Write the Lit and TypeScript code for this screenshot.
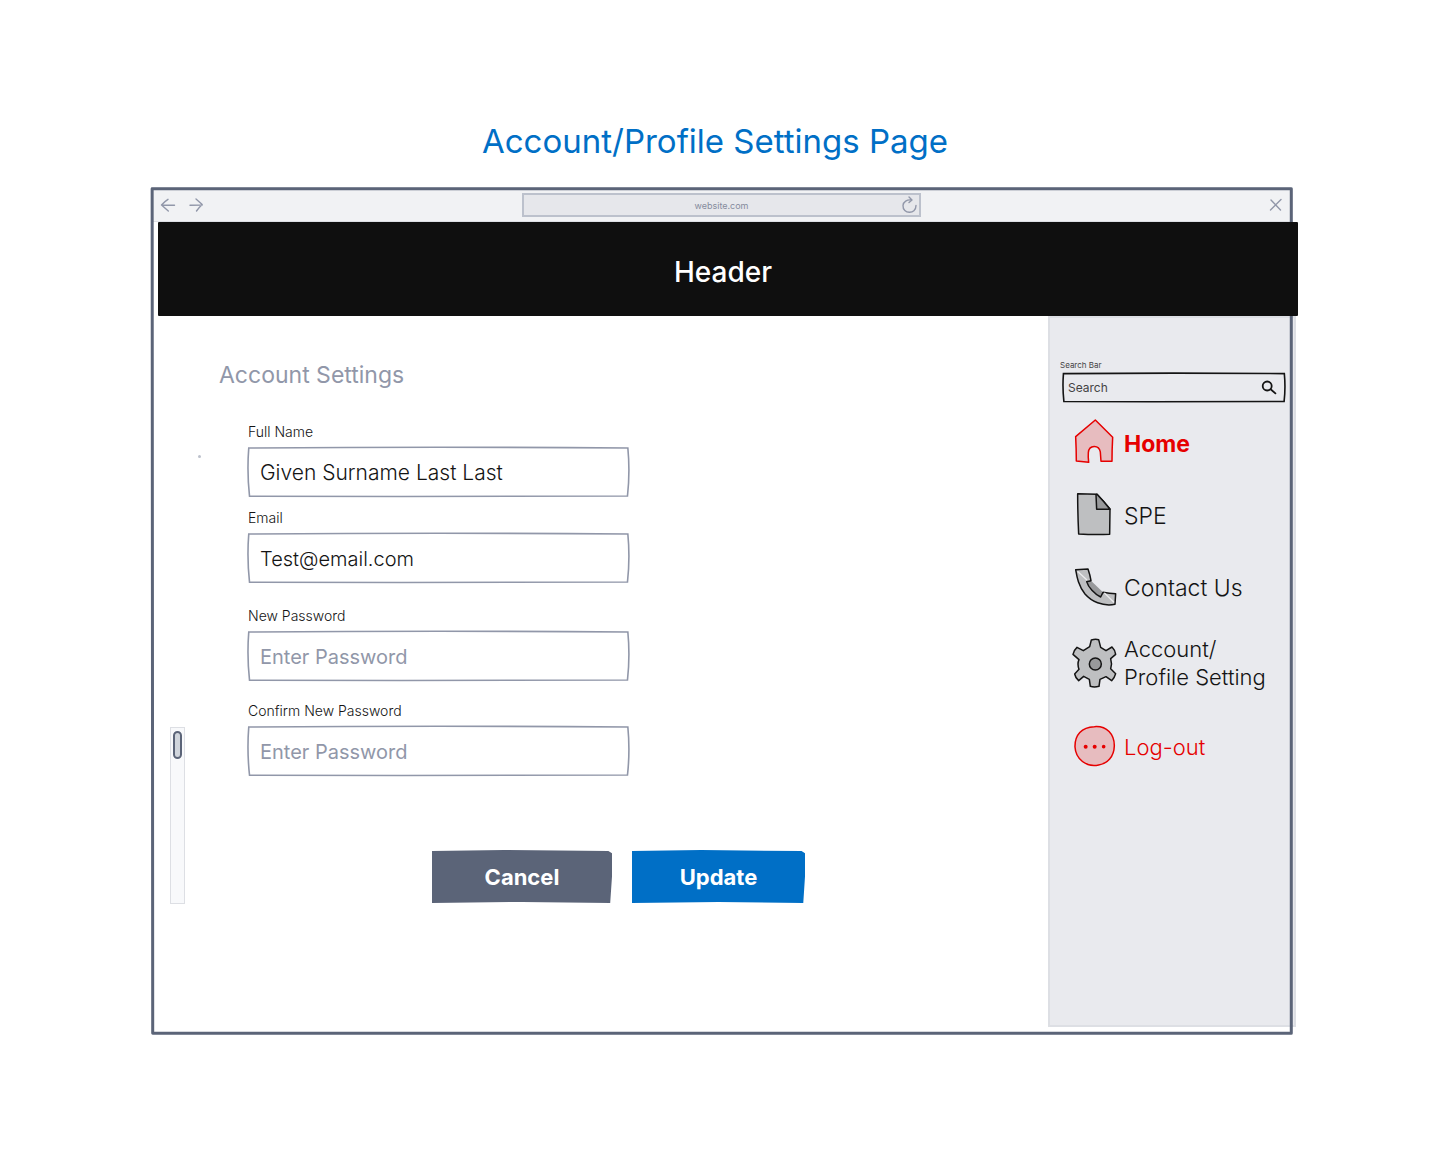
import { LitElement, html, css, svg, nothing } from "lit";
import { customElement, property, state } from "lit/decorators.js";

type IconName = "home" | "file" | "phone" | "gear" | "more";

const icons = {
  home: svg`<g transform="translate(-30 -79) scale(.3333)">
    <path fill="#e7bcbf" stroke="#e60000" stroke-width="4.5" d="M163 240 L104 290 Q106 330 106 363 L143 367 Q141 350 142 338 C144 314 174 314 178 336 L180 364 L213 364 Q213 330 215 292 Z"/>
  </g>`,
  file: svg`<g transform="translate(-10 -11) scale(.3333)">
    <path fill="#bebfc1" stroke="#141414" stroke-width="4.5" d="M50 41 L108 43 Q130 66 147 87 L146 163 Q100 165 53 162 Q50 100 50 41 Z"/>
    <path fill="#98999b" stroke="#141414" stroke-width="4.5" d="M105 44 L107 88 L147 88 Q128 64 108 43 Z"/>
  </g>`,
  phone: svg`<g transform="translate(-10 -83) scale(.3333)">
    <path fill="#98999b" d="M90 302 L126 337 L119 351 Q88 335 77 305 Z"/>
    <path fill="#bebfc1" stroke="#141414" stroke-width="4.5" d="M44 269 L81 267 Q87 284 90 302 L77 305 C82 322 100 342 119 351 L126 337 Q145 341 164 341 L162 373 C124 380 91 364 72 342 C52 317 48 292 44 269 Z"/>
    <path fill="none" stroke="#ececee" stroke-width="4" d="M51 275 L77 299 M131 340 L158 366"/>
  </g>`,
  gear: svg`<g transform="translate(-10 -13) scale(.3333)">
    <path fill="#bebfc1" stroke="#141414" stroke-width="4.5" d="M91 45 Q103 41 113 44 L119 67 L135 77 L153 66 Q163 76 164 88 L149 101 Q154 116 149 131 L164 146 Q161 158 152 167 L135 155 L117 163 L114 184 Q100 188 88 184 L85 163 L68 154 L53 167 Q43 158 41 147 L54 133 Q48 117 54 104 L36 88 Q39 75 48 67 L67 77 L86 65 Z"/>
    <circle cx="103" cy="117" r="18" fill="#98999b" stroke="#141414" stroke-width="4.5"/>
  </g>`,
  more: svg`<g transform="translate(-10 -97) scale(.3333)">
    <path fill="#e7bcbf" stroke="#e60000" stroke-width="4.5" d="M100 305 C138 302 160 328 160 362 C159 396 139 416 113 420 C76 428 44 402 42 366 C41 330 62 306 100 305 Z"/>
    <g fill="#e60000"><circle cx="74" cy="365" r="6"/><circle cx="101" cy="365" r="6"/><circle cx="128" cy="365" r="5.5"/></g>
  </g>`,
};

/** Hand-drawn rectangle that stretches to whatever box it shares a grid cell with. */
const sketchBox = (className: string) => html`
  <svg class="sketch ${className}" viewBox="0 0 100 100" preserveAspectRatio="none" aria-hidden="true">
    <path vector-effect="non-scaling-stroke" stroke-width="1.6"
      d="M.2 2 Q50 -1 99.7 2 Q100.3 50 99.6 98 Q50 99.500 .4 98.500 Q-.3 50 .2 2 Z"/>
  </svg>`;

const sketchStyles = css`
  * { box-sizing: border-box; }
  .sketch {
    grid-area: 1 / 1;
    width: 100%;
    height: 0;
    min-height: 100%;
    overflow: visible;
    pointer-events: none;
    fill: none;
  }
`;

@customElement("form-field")
export class FormField extends LitElement {
  @property() label = "";
  @property() type = "text";
  @property() value = "";
  @property() placeholder = "";

  static styles = [sketchStyles, css`
    :host { display: block; font-size: 20px; }
    .label {
      display: block;
      height: 18px;
      margin-bottom: 6px;
      font-size: 14px;
      font-weight: 300;
      line-height: 18px;
      color: #141414;
    }
    .box { display: grid; height: 50px; }
    .outline { stroke: #9197a9; }
    .input {
      grid-area: 1 / 1;
      width: 100%;
      min-width: 0;
      padding: 1px 12px 0;
      border: 0;
      background: transparent;
      color: #141414;
      font: inherit;
      font-weight: 300;
    }
    .input::placeholder { color: #9197a9; opacity: 1; font-weight: 400; }
  `];

  render() {
    return html`
      <label class="label" for="input">${this.label}</label>
      <div class="box">
        ${sketchBox("outline")}
        <input class="input" id="input" type=${this.type} .value=${this.value}
          placeholder=${this.placeholder || nothing} />
      </div>`;
  }
}

interface NavItem { label: string; icon: IconName; current?: boolean; compact?: boolean; }

@customElement("side-bar")
export class SideBar extends LitElement {
  @state() private items: NavItem[] = [
    { label: "Home", icon: "home", current: true },
    { label: "SPE", icon: "file" },
    { label: "Contact Us", icon: "phone" },
    { label: "Account/\nProfile Setting", icon: "gear", compact: true },
  ];

  static styles = [sketchStyles, css`
    :host {
      display: block;
      padding: 41px 9px 40px 9px;
      border: 2px solid #dddfe4;
      background: #e9eaee;
      color: #141414;
    }
    .search-label {
      display: block;
      margin: 1px 0 0 1px;
      font-size: 8px;
      line-height: 10px;
      color: #444;
    }
    .search {
      display: grid;
      height: 29px;
      margin: 3px 0 17px 4px;
      width: 222px;
      max-width: 100%;
    }
    .outline { stroke: #141414; }
    .search-row { grid-area: 1 / 1; display: flex; align-items: center; padding: 0 8px 0 5px; }
    .search-input {
      flex: 1;
      min-width: 0;
      padding: 0;
      border: 0;
      background: transparent;
      color: #333;
      font: inherit;
      font-size: 12px;
    }
    .search-input::placeholder { color: #444; opacity: 1; }
    .search-button { display: flex; padding: 0; border: 0; background: none; }
    .list {
      display: flex;
      flex-direction: column;
      gap: 22px;
      margin: 0;
      padding: 0 0 0 12px;
      list-style: none;
    }
    .link, .logout {
      display: flex;
      align-items: center;
      gap: 7px;
      min-height: 50px;
      padding: 0;
      border: 0;
      background: none;
      color: inherit;
      font: inherit;
      font-size: 23px;
      font-weight: 300;
      line-height: 28px;
      text-align: left;
      text-decoration: none;
      white-space: pre;
    }
    .current { color: #e60000; font-weight: 700; }
    .compact, .logout { font-size: 22px; }
    .logout { margin: 31px 0 0 12px; color: #e60000; }
    .icon { flex: none; overflow: visible; stroke-linejoin: round; stroke-linecap: round; }
  `];

  private icon(name: IconName) {
    return html`<svg class="icon" width="46" height="50" viewBox="0 0 46 50" aria-hidden="true">${icons[name]}</svg>`;
  }

  render() {
    return html`
      <label class="search-label" for="search">Search Bar</label>
      <div class="search">
        ${sketchBox("outline")}
        <div class="search-row">
          <input class="search-input" id="search" type="search" placeholder="Search" />
          <button class="search-button" aria-label="Search">
            <svg width="16" height="16" viewBox="0 0 16 16" fill="none" stroke="#141414" stroke-width="1.8" stroke-linecap="round">
              <circle cx="6.2" cy="6" r="4.5"/><path d="M9.6 9.2 L14.4 13.4"/>
            </svg>
          </button>
        </div>
      </div>
      <nav>
        <ul class="list">
          ${this.items.map((item) => html`
            <li><a class="link ${item.current ? "current" : ""} ${item.compact ? "compact" : ""}" href="#"
              aria-current=${item.current ? "page" : nothing}>${this.icon(item.icon)}<span>${item.label}</span></a></li>`)}
        </ul>
      </nav>
      <button class="logout">${this.icon("more")}<span>Log-out</span></button>`;
  }
}

@customElement("app-root")
export class AppRoot extends LitElement {
  static styles = [sketchStyles, css`
    :host {
      display: block;
      padding: 116px 152px 118px 151px;
      background: #fff;
      font-family: Inter, "Liberation Sans", sans-serif;
    }
    .title {
      margin: 0 0 21px;
      padding-right: 14px;
      color: #006fc6;
      font-size: 33px;
      font-weight: 400;
      line-height: 50px;
      text-align: center;
    }
    .window { display: grid; }
    .frame { z-index: 1; stroke: #5b6478; stroke-width: 3px; stroke-linejoin: round; }
    .content { grid-area: 1 / 1; display: flex; flex-direction: column; min-width: 0; }
    .toolbar {
      display: grid;
      grid-template-columns: minmax(0, 1fr) minmax(0, 399px) minmax(0, 1fr);
      align-items: center;
      height: 35px;
      padding: 2px 10px 0 9px;
      border-bottom: 1px solid #dddfe4;
      background: #f1f2f4;
    }
    .history { display: flex; gap: 12px; }
    .tool { display: flex; padding: 0; border: 0; background: none; }
    .tool svg { fill: none; stroke: #9197a9; stroke-width: 1.4px; stroke-linecap: round; stroke-linejoin: round; }
    .address {
      display: grid;
      grid-template-columns: 18px 1fr 18px;
      align-items: center;
      height: 24px;
      border: 2px solid #bcc1cc;
      background: #e6e7eb;
    }
    .url {
      grid-column: 2;
      min-width: 0;
      padding: 0;
      border: 0;
      background: none;
      color: #858b9d;
      font: inherit;
      font-size: 9px;
      text-align: center;
    }
    .close { justify-self: end; }
    .banner {
      z-index: 2;
      margin: 0 -5px 0 7px;
      padding: 35px 16px 29px 6px;
      border-radius: 1px;
      background: #0f0f0f;
      color: #fff;
      font-size: 28px;
      font-weight: 500;
      line-height: 30px;
      text-align: center;
    }
    .body { display: flex; padding-bottom: 8px; }
    .main { display: flex; flex: 1; min-width: 0; padding-left: 19px; }
    .track {
      flex: none;
      width: 15px;
      height: 177px;
      margin-top: 411px;
      padding: 3px 2px;
      border: 1px solid #dddfe4;
      background: #f8f9fb;
    }
    .thumb {
      width: 9px;
      height: 28px;
      border: 2px solid #5b6478;
      border-radius: 5px;
      background: #d0d5dc;
    }
    .speck {
      flex: none;
      width: 3px;
      height: 3px;
      margin: 139px 18px 0 13px;
      border-radius: 50%;
      background: #bcc1cc;
    }
    .form { flex: 1; min-width: 0; padding: 43px 32px 32px 0; }
    .heading {
      margin: 0 0 32px;
      color: #9197a9;
      font-size: 23px;
      font-weight: 400;
      line-height: 32px;
    }
    .fields { max-width: 410px; padding-left: 29px; }
    .group { display: grid; gap: 12px; margin: 0 0 24px; }
    .passwords { gap: 21px; margin: 0; }
    .prominent { font-size: 21px; }
    .actions { display: flex; flex-wrap: wrap; gap: 20px; margin-top: 74px; padding-left: 213px; }
    .button {
      min-width: 180px;
      height: 53px;
      padding: 0 24px;
      border: 0;
      background: #5b6478;
      clip-path: polygon(0 2%, 40% 0, 98% 2%, 100% 6%, 100% 50%, 99% 100%, 50% 98%, 0 100%);
      color: #fff;
      font: inherit;
      font-size: 22px;
      font-weight: 700;
    }
    .primary { min-width: 173px; background: #006fc6; }
    .sidebar { flex: none; width: 248px; min-height: 711px; margin-right: -3px; }
  `];

  render() {
    return html`
      <h1 class="title">Account/Profile Settings Page</h1>
      <div class="window">
        <svg class="sketch frame" viewBox="0 0 1000 1000" preserveAspectRatio="none" aria-hidden="true">
          <path vector-effect="non-scaling-stroke" d="M1 2 L998.500 2 L998.500 998 L1.500 998 Z"/>
        </svg>
        <div class="content">
          <div class="toolbar">
            <div class="history">
              <button class="tool" aria-label="Back">
                <svg width="16" height="16" viewBox="0 0 16 16"><path d="M14.5 8.3 L1.5 8 M8 2.3 Q4.500 4.500 1.500 8 L8.300 14"/></svg>
              </button>
              <button class="tool" aria-label="Forward">
                <svg width="16" height="16" viewBox="0 0 16 16"><path d="M2 8.200 L14.200 8 M8 2 L14.200 7.500 Q11 10.500 8.500 14"/></svg>
              </button>
            </div>
            <div class="address">
              <input class="url" type="text" aria-label="Address" .value=${"website.com"} />
              <button class="tool" aria-label="Reload">
                <svg width="18" height="18" viewBox="0 0 18 18"><path d="M15 9.500 C15 19 1.500 18 2 9.500 C2.300 5.500 6 3.500 10.500 4 M8 1 L11 4 L8 6.500"/></svg>
              </button>
            </div>
            <button class="tool close" aria-label="Close">
              <svg width="14" height="14" viewBox="0 0 14 14"><path d="M2 2 L11.500 12 M12 1.500 L1.500 12"/></svg>
            </button>
          </div>
          <header class="banner">Header</header>
          <div class="body">
            <main class="main">
              <div class="track" role="scrollbar" aria-label="Scroll" aria-controls="form" aria-valuenow="0" aria-orientation="vertical">
                <div class="thumb"></div>
              </div>
              <span class="speck"></span>
              <form class="form" id="form" @submit=${(e: Event) => e.preventDefault()}>
                <h2 class="heading">Account Settings</h2>
                <div class="fields">
                  <div class="group">
                    <form-field class="prominent" label="Full Name" value="Given Surname Last Last"></form-field>
                    <form-field label="Email" type="email" value="Test@email.com"></form-field>
                  </div>
                  <div class="group passwords">
                    <form-field label="New Password" type="password" placeholder="Enter Password"></form-field>
                    <form-field label="Confirm New Password" type="password" placeholder="Enter Password"></form-field>
                  </div>
                </div>
                <div class="actions">
                  <button class="button" type="button">Cancel</button>
                  <button class="button primary" type="submit">Update</button>
                </div>
              </form>
            </main>
            <side-bar class="sidebar"></side-bar>
          </div>
        </div>
      </div>`;
  }
}
